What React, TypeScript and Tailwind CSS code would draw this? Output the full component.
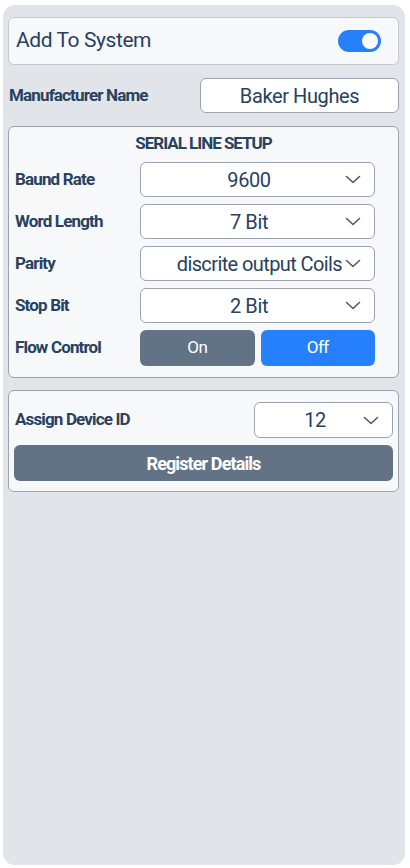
import { useState } from 'react'

const font = { fontFamily: 'Roboto, "Liberation Sans", sans-serif' }

function Chevron() {
  return (
    <svg width="16" height="9" viewBox="0 0 16 9" fill="none" className="shrink-0">
      <path d="M1.5 1.5 8 7.5l6.5-6" stroke="#4b5a6c" strokeWidth="1.6" strokeLinecap="round" strokeLinejoin="round" />
    </svg>
  )
}

function Select({ value, className = '' }: { value: string; className?: string }) {
  return (
    <div className={`flex h-[35px] items-center rounded-md border border-[#9aa3ae] bg-white pl-3 pr-[13px] ${className}`}>
      <span className="flex-1 whitespace-nowrap text-center text-[20px] leading-normal tracking-[-0.02em] text-[#27415e]">{value}</span>
      <Chevron />
    </div>
  )
}

function Row({ label, children }: { label: string; children: React.ReactNode }) {
  return (
    <div className="flex items-center">
      <span className="w-[125px] shrink-0 text-[17px] font-bold tracking-[-0.05em] text-[#27415e]">{label}</span>
      <div className="w-[235px]">{children}</div>
    </div>
  )
}

export default function App() {
  const [enabled, setEnabled] = useState(true)
  const [flow, setFlow] = useState<'on' | 'off'>('off')

  return (
    <div className="min-h-screen bg-white pt-[5px]" style={font}>
      <div className="ml-[3px] flex h-[860px] w-[402px] flex-col rounded-xl bg-[#e1e4e8] px-[5px] pt-[12px]">
        {/* Add to system */}
        <div className="flex h-[48px] w-[391px] items-center justify-between rounded-md border border-[#c3c8ce] bg-[#f7f8fa] pl-[7px] pr-[17px]">
          <span className="text-[21px] tracking-[-0.02em] text-[#27415e]">Add To System</span>
          <button
            onClick={() => setEnabled(!enabled)}
            className={`flex h-[22px] w-[43px] items-center rounded-full px-[3px] ${enabled ? 'justify-end bg-[#2680fb]' : 'justify-start bg-[#9aa3ae]'}`}
          >
            <span className="h-[16px] w-[16px] rounded-full bg-white" />
          </button>
        </div>

        {/* Manufacturer */}
        <div className="mt-[13px] flex w-[391px] items-center justify-between pl-[1px]">
          <span className="text-[17px] font-bold tracking-[-0.05em] text-[#27415e]">Manufacturer Name</span>
          <div className="flex h-[35px] w-[199px] items-center justify-center rounded-md border border-[#9aa3ae] bg-white text-[20px] tracking-[-0.02em] text-[#27415e]">
            Baker Hughes
          </div>
        </div>

        {/* Serial line setup */}
        <div className="mt-[13px] flex w-[391px] flex-col gap-[7px] rounded-md border border-[#9aa3ae] bg-[#f7f8fa] pb-[11px] pl-[6px] pt-[4px]">
          <div className="pr-[6px] text-center text-[17px] font-bold leading-[24px] tracking-[-0.06em] text-[#27415e]">SERIAL LINE SETUP</div>
          <Row label="Baund Rate"><Select value="9600" /></Row>
          <Row label="Word Length"><Select value="7 Bit" /></Row>
          <Row label="Parity">
            <div className="flex h-[35px] items-center rounded-md border border-[#9aa3ae] bg-white pl-3 pr-[13px]">
              <span className="mr-[3px] flex-1 whitespace-nowrap text-right text-[20px] leading-normal tracking-[-0.03em] text-[#27415e]">discrite output Coils</span>
              <Chevron />
            </div>
          </Row>
          <Row label="Stop Bit"><Select value="2 Bit" /></Row>
          <Row label="Flow Control">
            <div className="flex gap-[6px]">
              <button
                onClick={() => setFlow('on')}
                className={`h-[36px] flex-1 rounded-md text-[17px] tracking-[-0.03em] text-white ${flow === 'on' ? 'bg-[#2680fb]' : 'bg-[#627386]'}`}
              >
                On
              </button>
              <button
                onClick={() => setFlow('off')}
                className={`h-[36px] flex-1 rounded-md text-[17px] tracking-[-0.03em] text-white ${flow === 'off' ? 'bg-[#2680fb]' : 'bg-[#627386]'}`}
              >
                Off
              </button>
            </div>
          </Row>
        </div>

        {/* Device id */}
        <div className="mt-[12px] flex w-[391px] flex-col gap-[7px] rounded-md border border-[#9aa3ae] bg-[#f7f8fa] px-[5px] pb-[10px] pt-[11px]">
          <div className="flex items-center justify-between pl-[1px]">
            <span className="text-[17px] font-bold tracking-[-0.05em] text-[#27415e]">Assign Device ID</span>
            <Select value="12" className="h-[36px] w-[139px]" />
          </div>
          <button className="h-[36px] w-full rounded-md bg-[#627386] text-[18px] font-bold tracking-[-0.05em] text-white">
            Register Details
          </button>
        </div>
      </div>
    </div>
  )
}
